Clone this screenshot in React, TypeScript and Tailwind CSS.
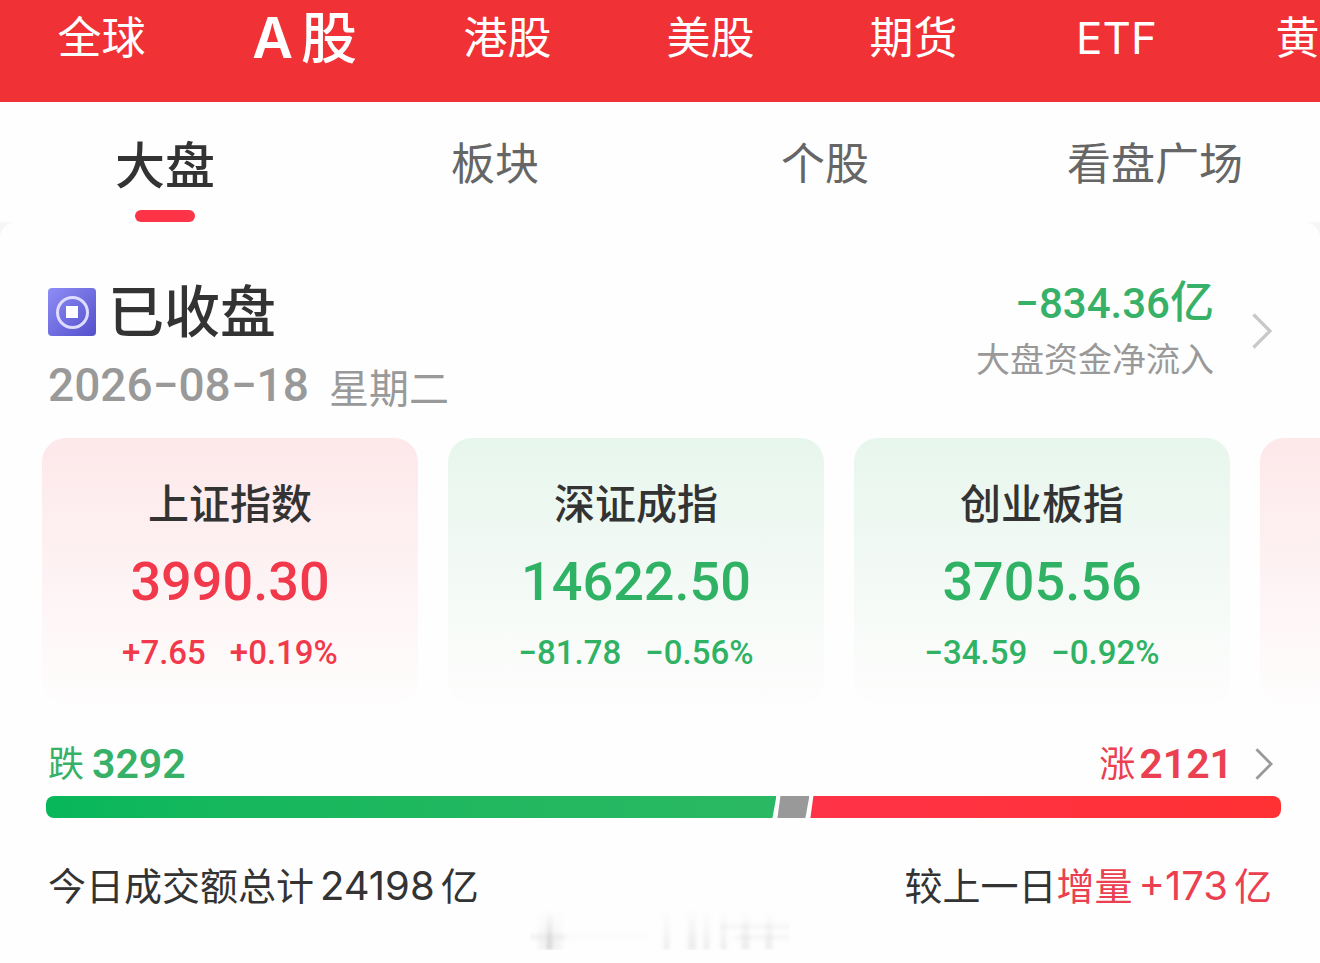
import React from "react";

const markets = ["全球", "A股", "港股", "美股", "期货", "ETF", "黄金"];
const sections = ["大盘", "板块", "个股", "看盘广场"];

type Quote = { name: string; price: string; change: string; percent: string; up: boolean };

const quotes: Quote[] = [
  { name: "上证指数", price: "3990.30", change: "+7.65", percent: "+0.19%", up: true },
  { name: "深证成指", price: "14622.50", change: "−81.78", percent: "−0.56%", up: false },
  { name: "创业板指", price: "3705.56", change: "−34.59", percent: "−0.92%", up: false },
];

const breadth = { down: 3292, flat: 144, up: 2121 };

function Chevron({ className }: { className: string }) {
  return (
    <svg className={className} viewBox="0 0 20 36" fill="none" stroke="currentColor" aria-hidden="true">
      <path d="M1.500 1.500 L18 18 L1.500 34.500" strokeWidth="3.200" />
    </svg>
  );
}

function CoinIcon() {
  return (
    <svg className="size-12 shrink-0" viewBox="0 0 48 48" aria-hidden="true">
      <defs>
        <linearGradient id="coin" x1="0" y1="0" x2="1" y2="1">
          <stop offset="0" stopColor="#8f8df6" />
          <stop offset="1" stopColor="#5350cb" />
        </linearGradient>
      </defs>
      <rect width="48" height="48" rx="4" fill="url(#coin)" />
      <circle cx="24.500" cy="24.500" r="15" fill="none" stroke="#dedcff" strokeWidth="3" />
      <rect x="18" y="18" width="12" height="12" fill="#fff" />
    </svg>
  );
}

function QuoteCard({ quote }: { quote: Quote }) {
  const tint = quote.up ? "from-[#fde8ea] text-[#f2394b]" : "from-[#e7f6ed] text-[#2fb264]";
  return (
    <a
      href="#quote"
      className={`flex w-[376px] shrink-0 flex-col items-center rounded-3xl bg-linear-to-b to-[#fefdfd] pt-[38px] pb-[26px] ${tint}`}
    >
      <span className="text-[41px] leading-[56px] font-medium text-[#333]">{quote.name}</span>
      <span className="mt-3 font-['Roboto'] text-[54px] leading-[76px] font-medium">{quote.price}</span>
      <span className="mt-2 flex gap-6 font-['Roboto'] text-[33px] leading-[50px] font-medium">
        <span>{quote.change}</span>
        <span>{quote.percent}</span>
      </span>
    </a>
  );
}

function FadedHeading() {
  return (
    <svg className="mx-auto block h-10 w-[260px]" viewBox="0 0 260 40" aria-hidden="true">
      <defs>
        <linearGradient id="fade" x1="0" y1="0" x2="0" y2="1">
          <stop offset="0" stopColor="#999" stopOpacity="0" />
          <stop offset="1" stopColor="#999" stopOpacity="0.4" />
        </linearGradient>
        <filter id="soft" x="-10%" y="-10%" width="120%" height="120%">
          <feGaussianBlur stdDeviation="2" />
        </filter>
      </defs>
      <g filter="url(#soft)">
        <rect x="8" y="2" width="24" height="38" fill="url(#fade)" opacity="0.3" />
        <rect x="17" y="0" width="5" height="40" fill="url(#fade)" />
        <rect x="0" y="25" width="36" height="4" fill="#999" opacity="0.15" />
        <rect x="36" y="26" width="80" height="2" fill="#999" opacity="0.07" />
        <g fill="url(#fade)" opacity="0.5">
          <rect x="134" y="0" width="5" height="40" />
          <rect x="158" y="0" width="8" height="40" />
          <rect x="174" y="0" width="5" height="40" />
          <rect x="191" y="0" width="5" height="40" />
          <rect x="212" y="0" width="7" height="40" />
          <rect x="236" y="0" width="6" height="40" />
        </g>
        <rect x="190" y="15" width="70" height="3" fill="#999" opacity="0.12" />
        <rect x="205" y="26" width="55" height="3" fill="#999" opacity="0.14" />
      </g>
    </svg>
  );
}

export default function App() {
  return (
    <div className="min-h-screen overflow-x-hidden bg-[#fefefe] font-['Inter','Noto_Sans_CJK_SC',sans-serif] text-[#333]">
      <nav className="flex h-[102px] overflow-hidden bg-[#f03136] text-white" aria-label="市场">
        {markets.map((m) => (
          <button
            key={m}
            type="button"
            className={
              m === "A股"
                ? "flex h-[76px] w-[203px] shrink-0 items-center justify-center gap-2 text-[56px] font-medium"
                : "flex h-[76px] w-[203px] shrink-0 items-center justify-center text-[44px]"
            }
          >
            {m === "A股" ? (
              <>
                <span className="font-semibold">A</span>
                <span>股</span>
              </>
            ) : (
              m
            )}
          </button>
        ))}
      </nav>

      <nav className="grid h-[120px] grid-cols-4" aria-label="栏目">
        {sections.map((s, i) => (
          <button
            key={s}
            type="button"
            className={
              i === 0
                ? "flex flex-col items-center pt-7 text-[50px] leading-[72px] font-medium"
                : "flex flex-col items-center pt-7 text-[44px] leading-[68px] text-[#666]"
            }
          >
            {s}
            {i === 0 && <span className="mt-2 h-3 w-[60px] rounded-full bg-[#fd3347]" />}
          </button>
        ))}
      </nav>

      <div className="bg-[#f6f6f6]">
        <main className="rounded-t-2xl bg-[#fefefe] pt-[52px]">
          <div className="flex items-start justify-between pr-12 pl-12">
            <div className="pt-[6px]">
              <h1 className="flex items-center gap-3 text-[56px] leading-[64px] font-medium">
                <CoinIcon />
                已收盘
              </h1>
              <p className="mt-[13px] flex h-14 items-center gap-5 leading-[56px] text-[#999]">
                <span className="font-['Roboto'] text-[46px] font-medium">2026−08−18</span>
                <span className="pt-2 text-[40px]">星期二</span>
              </p>
            </div>
            <button type="button" className="flex items-center gap-[38px] text-right">
              <span className="flex flex-col">
                <span className="text-[44px] leading-[56px] font-medium text-[#36b167]">
                  <span className="font-['Roboto'] text-[42px]">−834.36</span>亿
                </span>
                <span className="text-[34px] leading-[56px] text-[#999]">大盘资金净流入</span>
              </span>
              <Chevron className="h-9 w-5 text-[#c8c8c8]" />
            </button>
          </div>

          <div className="mt-[25px] flex gap-[30px] overflow-hidden pl-[42px]">
            {quotes.map((q) => (
              <QuoteCard key={q.name} quote={q} />
            ))}
            <div className="w-[376px] shrink-0 rounded-3xl bg-linear-to-b from-[#fde8ea] to-[#fefdfd]" />
          </div>

          <section className="mt-9 pr-[39px] pl-[46px]">
            <div className="flex items-center justify-between pr-2 pl-[2px] leading-[48px]">
              <p className="flex items-center gap-2 text-[36px] text-[#36b167]">
                跌<span className="font-['Roboto'] text-[41px] font-semibold">{breadth.down}</span>
              </p>
              <button type="button" className="flex items-center gap-[22px] text-[36px] text-[#ea4050]">
                <span className="flex items-center gap-1">
                  涨<span className="font-['Roboto'] text-[41px] font-semibold">{breadth.up}</span>
                </span>
                <Chevron className="h-8 w-[18px] text-[#999]" />
              </button>
            </div>
            <div className="mt-2 flex h-[22px] gap-px overflow-hidden rounded-lg">
              <div
                className="bg-linear-to-r from-[#07b75a] to-[#2bb863] [clip-path:polygon(0_0,100%_0,calc(100%-4px)_100%,0_100%)]"
                style={{ flex: `${breadth.down} 1 0` }}
              />
              <div
                className="bg-[#999] [clip-path:polygon(3px_0,100%_0,calc(100%-4px)_100%,0_100%)]"
                style={{ flex: `${breadth.flat} 1 0` }}
              />
              <div
                className="bg-linear-to-r from-[#ff3347] to-[#ff3133] [clip-path:polygon(3px_0,100%_0,100%_100%,0_100%)]"
                style={{ flex: `${breadth.up} 1 0` }}
              />
            </div>
          </section>

          <section className="mt-11 flex items-center justify-between pr-12 pl-12 text-[38px] leading-[48px]">
            <p className="flex items-center gap-[6px]">
              今日成交额总计<span className="text-[40px]">24198</span>亿
            </p>
            <p className="flex items-center">
              较上一日
              <span className="flex items-center gap-[6px] text-[#ea4050]">
                增量<span className="text-[40px]">+173</span>亿
              </span>
            </p>
          </section>
          <FadedHeading />
        </main>
      </div>
    </div>
  );
}
